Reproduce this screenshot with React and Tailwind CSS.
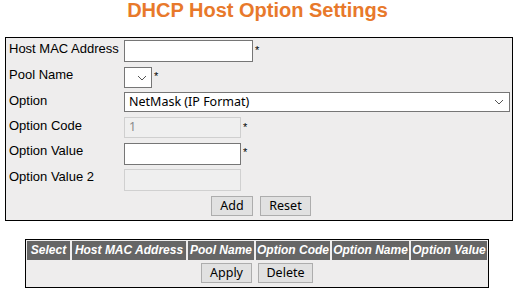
import React from 'react';

const labelFont = { fontFamily: '"Liberation Sans", Arial, sans-serif' };
const ctrlFont = { fontFamily: '"Noto Sans", "Open Sans", sans-serif' };

function Chevron() {
  return (
    <svg width="10" height="6" viewBox="0 0 10 6" className="shrink-0">
      <path d="M1 1 L5 5 L9 1" fill="none" stroke="#555" strokeWidth="1" />
    </svg>
  );
}

function Btn({ children, w }) {
  return (
    <button
      className={`h-[20px] ${w} border border-[#adadad] bg-[#e1e1e1] text-[12.5px] leading-none text-black`}
      style={ctrlFont}
    >
      {children}
    </button>
  );
}

function Row({ label, h, children }) {
  return (
    <div className={`flex items-start ${h}`}>
      <div className="w-[118px] shrink-0 pl-[3px] pt-[3px] text-[13px] leading-[15px] text-black" style={labelFont}>
        {label}
      </div>
      {children}
    </div>
  );
}

function Star() {
  return <span className="ml-[2px] mt-[7px] text-[11px] leading-none text-black" style={labelFont}>*</span>;
}

const headers = [
  ['Select', 'w-[43px]'],
  ['Host MAC Address', 'w-[114px]'],
  ['Pool Name', 'w-[66px]'],
  ['Option Code', 'w-[74px]'],
  ['Option Name', 'w-[77px]'],
  ['Option Value', 'w-[76px]'],
];

export default function App() {
  return (
    <div className="w-[515px] bg-white pb-[6px]">
      <h1
        className="text-center text-[20px] font-bold leading-[20px] text-[#e8792b]"
        style={labelFont}
      >
        DHCP Host Option Settings
      </h1>

      {/* Form box */}
      <div className="ml-[5px] mt-[17px] w-[508px] border border-black bg-[#eeeded] pb-[4px]">
        <Row label="Host MAC Address" h="h-[26px]">
          <div className="mt-[2px] h-[22px] w-[129px] border border-[#767676] bg-white" />
          <Star />
        </Row>
        <Row label="Pool Name" h="h-[26px]">
          <div className="mt-[3px] flex h-[21px] w-[28px] items-center justify-end border border-[#767676] bg-white pr-[4px]">
            <Chevron />
          </div>
          <Star />
        </Row>
        <Row label="Option" h="h-[25px]">
          <div
            className="mt-[2px] flex h-[20px] w-[386px] items-center justify-between border border-[#767676] bg-white pl-[4px] pr-[5px] text-[12.5px] text-black"
            style={ctrlFont}
          >
            <span>NetMask (IP Format)</span>
            <Chevron />
          </div>
        </Row>
        <Row label="Option Code" h="h-[25px]">
          <div
            className="mt-[2px] flex h-[21px] w-[117px] items-center border border-[#cfcfcf] bg-[#efefef] pl-[4px] text-[12.5px] text-[#8a8a8a]"
            style={ctrlFont}
          >
            1
          </div>
          <Star />
        </Row>
        <Row label="Option Value" h="h-[26px]">
          <div className="mt-[3px] h-[22px] w-[117px] border border-[#767676] bg-white" />
          <Star />
        </Row>
        <Row label="Option Value 2" h="h-[26px]">
          <div className="mt-[3px] h-[22px] w-[117px] border border-[#d0d0d0] bg-[#efefef]" />
        </Row>
        <div className="mt-[4px] flex justify-center gap-[7px] pl-[4px]">
          <Btn w="w-[42px]">Add</Btn>
          <Btn w="w-[51px]">Reset</Btn>
        </div>
      </div>

      {/* Host option table */}
      <div className="ml-[25px] mt-[18px] w-[464px] border border-black bg-[#eeeded] p-[1px]">
        <div className="flex gap-[2px]">
          {headers.map(([t, w]) => (
            <div
              key={t}
              className={`${w} h-[19px] whitespace-nowrap bg-[#666666] text-center text-[12px] font-bold italic leading-[19px] text-white`}
              style={labelFont}
            >
              {t}
            </div>
          ))}
        </div>
        <div className="flex h-[26px] items-center justify-center gap-[6px]">
          <Btn w="w-[51px]">Apply</Btn>
          <Btn w="w-[55px]">Delete</Btn>
        </div>
      </div>
    </div>
  );
}
